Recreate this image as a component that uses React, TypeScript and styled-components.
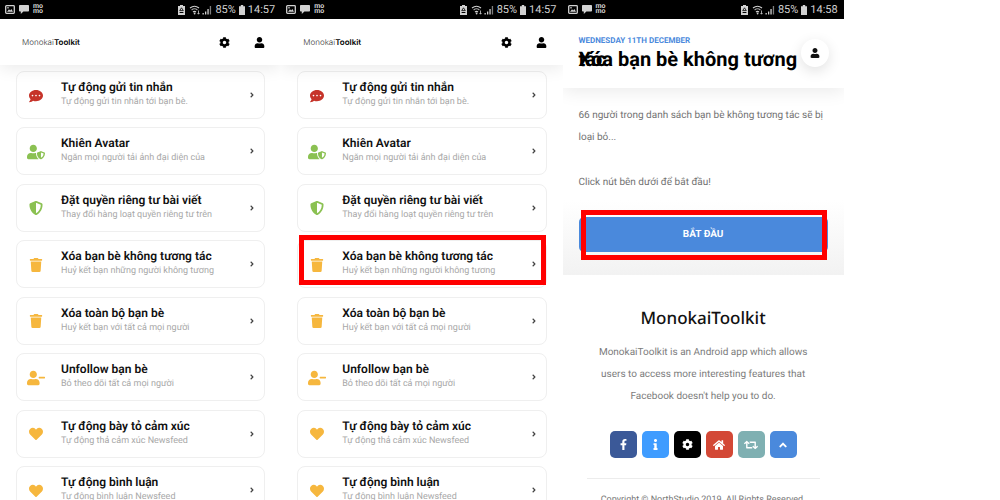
import React from "react";
import styled, { createGlobalStyle } from "styled-components";
import {
  FaAngleRight,
  FaAngleUp,
  FaCog,
  FaCommentDots,
  FaFacebookF,
  FaHeart,
  FaHome,
  FaInfo,
  FaRetweet,
  FaShieldAlt,
  FaTrash,
  FaUser,
  FaUserMinus,
  FaUserShield,
} from "react-icons/fa";
import type { IconType } from "react-icons";

const GlobalStyle = createGlobalStyle`
  *, *::before, *::after { box-sizing: border-box; }
  body {
    margin: 0;
    background: #fff;
    font-family: Roboto, "Noto Sans", sans-serif;
    color: #111;
    text-rendering: geometricPrecision;
  }
  h1, h2, p, ul { margin: 0; padding: 0; }
  ul { list-style: none; }
  button { font: inherit; border: 0; padding: 0; cursor: pointer; text-rendering: inherit; }
`;

const Board = styled.main`
  display: grid;
  grid-template-columns: 9fr 9fr 9fr 5fr;
  height: 100vh;
  overflow: hidden;
`;

const Phone = styled.section`
  display: flex;
  flex-direction: column;
  min-width: 0;
  overflow: hidden;
`;

const StatusRow = styled.div`
  display: flex;
  flex: none;
  align-items: center;
  justify-content: space-between;
  height: 19px;
  padding: 0 6px 0 5px;
  background: #000;
  color: #d2d2d2;
`;

const StatusGroup = styled.div<{ $gap: number }>`
  display: flex;
  align-items: center;
  gap: ${(p) => p.$gap}px;
  font-size: 11px;
  line-height: 19px;
`;

const Carrier = styled.span`
  display: flex;
  flex-direction: column;
  padding-bottom: 1px;
  font-size: 7px;
  font-weight: 700;
  line-height: 5px;
`;

const AppBar = styled.header`
  position: relative;
  z-index: 1;
  display: flex;
  flex: none;
  align-items: center;
  justify-content: space-between;
  height: 46px;
  padding: 0 16px 0 22px;
  background: #fff;
  box-shadow: 0 4px 16px rgba(0, 0, 0, 0.08);
`;

const Logo = styled.a`
  font-family: Inter, sans-serif;
  font-size: 8px;
  font-weight: 300;
  color: #333;
  text-decoration: none;

  b {
    font-weight: 600;
    color: #000;
  }
`;

const BarActions = styled.nav`
  display: flex;
  gap: 24px;
`;

const IconButton = styled.button`
  display: flex;
  background: none;
  color: #000;
  font-size: 11px;
`;

const List = styled.ul`
  padding-top: 6px;
`;

const ListItem = styled.li`
  padding: 0 16px 3%;
`;

const Card = styled.button`
  position: relative;
  display: grid;
  grid-template-columns: 44px 1fr 16px;
  align-items: center;
  width: 100%;
  height: 48px;
  border: 1px solid #efefef;
  border-radius: 8px;
  background: #fff;
  text-align: left;
`;

const CardIcon = styled.span<{ $color: string; $size: number }>`
  display: flex;
  justify-content: center;
  width: 38px;
  padding-top: 1px;
  color: ${(p) => p.$color};
  font-size: ${(p) => p.$size}px;
`;

const CardText = styled.span`
  display: flex;
  flex-direction: column;
  gap: 2px;
  min-width: 0;
  padding-bottom: 2px;
  white-space: nowrap;
`;

const CardTitle = styled.span`
  font-size: 12px;
  font-weight: 600;
  line-height: 14px;
  color: #111;
`;

const CardSubtitle = styled.span`
  font-size: 9px;
  line-height: 12px;
  color: #a8a8a8;
`;

const CardArrow = styled.span`
  display: flex;
  color: #444;
  font-size: 8px;
`;

const CardHighlight = styled.span`
  position: absolute;
  inset: -6px 0 2px 1px;
  border: 5px solid #f00;
`;

const PageHeader = styled.header`
  position: relative;
  z-index: 1;
  display: flex;
  flex: none;
  align-items: center;
  justify-content: space-between;
  height: 69px;
  padding: 0 15px 2px 16px;
  background: #fff;
  box-shadow: 0 4px 16px rgba(0, 0, 0, 0.08);
`;

const Heading = styled.div`
  flex: 1;
  min-width: 0;
`;

const DateLine = styled.p`
  padding-top: 2px;
  font-size: 8px;
  font-weight: 700;
  line-height: 10px;
  color: #4a89dc;
  text-transform: uppercase;
`;

/* Zero line height stacks the wrapped word on the first line. */
const PageTitle = styled.h1`
  padding: 13px 0;
  font-size: 20px;
  font-weight: 700;
  line-height: 0;
  color: #000;
`;

const Profile = styled.button`
  display: flex;
  flex: none;
  align-items: center;
  justify-content: center;
  width: 28px;
  height: 28px;
  border-radius: 50%;
  background: #fff;
  color: #111;
  font-size: 10px;
  box-shadow: 0 4px 14px rgba(0, 0, 0, 0.12);
`;

const Content = styled.div`
  flex: none;
  padding: 17px 16px 23px;
  background: linear-gradient(#fff 60%, #f2f2f2);
`;

const Message = styled.p`
  margin-bottom: 23px;
  font-size: 10px;
  line-height: 22px;
  color: #727272;
`;

const StartWrap = styled.div`
  position: relative;
`;

const StartButton = styled.button`
  display: block;
  width: 100%;
  height: 35px;
  border-radius: 5px;
  background: #4a89dc;
  color: #fff;
  font-size: 10px;
  font-weight: 700;
  text-transform: uppercase;
`;

const StartHighlight = styled.span`
  position: absolute;
  inset: -7px 1px -8px 2px;
  border: 5px solid #f00;
  pointer-events: none;
`;

const Footer = styled.footer`
  display: flex;
  flex: none;
  flex-direction: column;
  align-items: center;
  padding: 30px 24px 0;
  text-align: center;
`;

const FooterTitle = styled.h2`
  font-family: "Noto Sans", sans-serif;
  font-size: 17px;
  font-weight: 500;
  line-height: 26px;
  color: #111;
`;

const FooterText = styled.p`
  max-width: 220px;
  margin-top: 11px;
  font-size: 10px;
  line-height: 22px;
  color: #7c7c7c;
`;

const Socials = styled.div`
  display: flex;
  gap: 5px;
  margin-top: 23px;
`;

const SocialLink = styled.a<{ $bg: string; $size: number }>`
  display: flex;
  align-items: center;
  justify-content: center;
  width: 27px;
  height: 27px;
  border-radius: 5px;
  background: ${(p) => p.$bg};
  color: #fff;
  font-size: ${(p) => p.$size}px;
`;

const Copyright = styled.p`
  width: 100%;
  margin-top: 20px;
  padding-top: 14px;
  border-top: 1px solid #ececec;
  font-size: 9px;
  line-height: 14px;
  color: #777;
`;

function StatusBar({ time }: { time: string }) {
  return (
    <StatusRow>
      <StatusGroup $gap={4}>
        <svg width="10" height="9" viewBox="0 0 10 9">
          <rect x="0.7" y="0.7" width="8.6" height="7.6" rx="0.8" fill="none" stroke="currentColor" strokeWidth="1.3" />
          <path d="M2 6.8 4 4.2l1.2 1.2L6.4 4 8 6.8z" fill="currentColor" />
          <rect x="2.2" y="2.2" width="1.6" height="1.2" fill="currentColor" />
        </svg>
        <svg width="10" height="9" viewBox="0 0 10 9">
          <path d="M0.8 0h8.4q.8 0 .8.8v5q0 .8-.8.8H4.4L1.8 9V6.600H.8Q0 6.600 0 5.800v-5Q0 0 .8 0z" fill="currentColor" />
        </svg>
        <Carrier>
          <span>mo</span>
          <span>mo</span>
        </Carrier>
      </StatusGroup>
      <StatusGroup $gap={3}>
        <svg width="7" height="10" viewBox="0 0 7 10">
          <path d="M2 0h3v1h2v9H0V1h2z" fill="currentColor" />
          <path d="M3.500 2.800 5.300 5.600H1.700z" fill="none" stroke="#000" strokeWidth="0.8" />
          <path d="M1.600 7.500h3.800" stroke="#000" strokeWidth="1" />
        </svg>
        <svg width="24" height="10" viewBox="0 0 24 10">
          <g fill="none" stroke="currentColor" strokeWidth="1.100">
            <path d="M2 3Q6.500-.6 11 3" />
            <path d="M3.600 5Q6.500 2.600 9.400 5" opacity=".8" />
            <path d="M5 7Q6.500 5.700 8 7" />
          </g>
          <circle cx="6.600" cy="8.500" r="0.900" fill="currentColor" />
          <path d="M10.500 5.500v3.600M9.500 8l1 1.200 1-1.200" stroke="currentColor" strokeWidth=".8" fill="none" />
          <path d="M14.500 8h1.300v1.500h-1.300zM17 6.500h1.300v3H17zM19.400 4h1.300v5.500h-1.300z" fill="currentColor" />
          <path d="M21.800 1h1.300v8.500h-1.300z" fill="currentColor" opacity=".6" />
        </svg>
        <span>85%</span>
        <svg width="6" height="10" viewBox="0 0 6 10">
          <path d="M1.800 0h2.400v1.200H6V10H0V1.200h1.800z" fill="currentColor" />
        </svg>
        <span>{time}</span>
      </StatusGroup>
    </StatusRow>
  );
}

interface Tool {
  title: string;
  subtitle: string;
  icon: IconType;
  color: string;
  size: number;
}

const RED = "#c6342a";
const GREEN = "#8bc152";
const AMBER = "#f6b73e";

const tools: Tool[] = [
  { title: "Tự động gửi tin nhắn", subtitle: "Tự động gửi tin nhắn tới bạn bè.", icon: FaCommentDots, color: RED, size: 14 },
  { title: "Khiên Avatar", subtitle: "Ngăn mọi người tải ảnh đại diện của", icon: FaUserShield, color: GREEN, size: 18 },
  { title: "Đặt quyền riêng tư bài viết", subtitle: "Thay đổi hàng loạt quyền riêng tư trên", icon: FaShieldAlt, color: GREEN, size: 14 },
  { title: "Xóa bạn bè không tương tác", subtitle: "Huỷ kết bạn những người không tương", icon: FaTrash, color: AMBER, size: 14 },
  { title: "Xóa toàn bộ bạn bè", subtitle: "Huỷ kết bạn với tất cả mọi người", icon: FaTrash, color: AMBER, size: 14 },
  { title: "Unfollow bạn bè", subtitle: "Bỏ theo dõi tất cả mọi người", icon: FaUserMinus, color: AMBER, size: 18 },
  { title: "Tự động bày tỏ cảm xúc", subtitle: "Tự động thả cảm xúc Newsfeed", icon: FaHeart, color: AMBER, size: 14 },
  { title: "Tự động bình luận", subtitle: "Tự động bình luận Newsfeed", icon: FaHeart, color: AMBER, size: 14 },
];

function ToolsScreen({ highlighted }: { highlighted?: number }) {
  return (
    <Phone>
      <StatusBar time="14:57" />
      <AppBar>
        <Logo href="#">
          Monokai<b>Toolkit</b>
        </Logo>
        <BarActions>
          <IconButton aria-label="Settings">
            <FaCog />
          </IconButton>
          <IconButton aria-label="Account">
            <FaUser />
          </IconButton>
        </BarActions>
      </AppBar>
      <List>
        {tools.map(({ title, subtitle, icon: Icon, color, size }, i) => (
          <ListItem key={title}>
            <Card>
              <CardIcon $color={color} $size={size}>
                <Icon />
              </CardIcon>
              <CardText>
                <CardTitle>{title}</CardTitle>
                <CardSubtitle>{subtitle}</CardSubtitle>
              </CardText>
              <CardArrow>
                <FaAngleRight />
              </CardArrow>
              {i === highlighted && <CardHighlight />}
            </Card>
          </ListItem>
        ))}
      </List>
    </Phone>
  );
}

const socials: { label: string; icon: IconType; bg: string; size: number }[] = [
  { label: "Facebook", icon: FaFacebookF, bg: "#3b5998", size: 11 },
  { label: "Information", icon: FaInfo, bg: "#3f9cff", size: 11 },
  { label: "Settings", icon: FaCog, bg: "#000", size: 11 },
  { label: "Home", icon: FaHome, bg: "#d34836", size: 12 },
  { label: "Share", icon: FaRetweet, bg: "#7fb0b2", size: 14 },
  { label: "Back to top", icon: FaAngleUp, bg: "#4a89dc", size: 12 },
];

function CleanupScreen() {
  return (
    <Phone>
      <StatusBar time="14:58" />
      <PageHeader>
        <Heading>
          <DateLine>Wednesday 11th December</DateLine>
          <PageTitle>Xóa bạn bè không tương tác</PageTitle>
        </Heading>
        <Profile aria-label="Account">
          <FaUser />
        </Profile>
      </PageHeader>
      <Content>
        <Message>66 người trong danh sách bạn bè không tương tác sẽ bị loại bỏ...</Message>
        <Message>Click nút bên dưới để bắt đầu!</Message>
        <StartWrap>
          <StartButton>Bắt đầu</StartButton>
          <StartHighlight />
        </StartWrap>
      </Content>
      <Footer>
        <FooterTitle>MonokaiToolkit</FooterTitle>
        <FooterText>
          MonokaiToolkit is an Android app which allows users to access more interesting features that Facebook doesn't
          help you to do.
        </FooterText>
        <Socials>
          {socials.map(({ label, icon: Icon, bg, size }) => (
            <SocialLink key={label} href="#" aria-label={label} $bg={bg} $size={size}>
              <Icon />
            </SocialLink>
          ))}
        </Socials>
        <Copyright>Copyright © NorthStudio 2019. All Rights Reserved.</Copyright>
      </Footer>
    </Phone>
  );
}

export default function App() {
  return (
    <>
      <GlobalStyle />
      <Board>
        <ToolsScreen />
        <ToolsScreen highlighted={3} />
        <CleanupScreen />
      </Board>
    </>
  );
}
